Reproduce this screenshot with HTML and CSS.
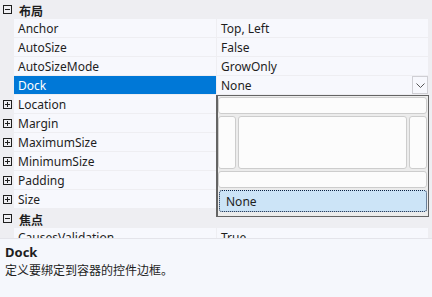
FILE: index.html
```html
<!DOCTYPE html>
<html lang="zh-CN">
<head>
    <meta charset="UTF-8">
    <title>属性</title>
    <link rel="stylesheet" href="styles.css">
</head>
<body>
    <div id="grid">
        <div class="category"><span class="box minus"></span><span class="cat-name">布局</span></div>
        <div class="row"><span class="gut"></span><span class="name">Anchor</span><span class="value">Top, Left</span></div>
        <div class="row"><span class="gut"></span><span class="name">AutoSize</span><span class="value">False</span></div>
        <div class="row"><span class="gut"></span><span class="name">AutoSizeMode</span><span class="value">GrowOnly</span></div>
        <div class="row selected"><span class="gut"></span><span class="name">Dock</span><span class="value">None<span class="drop-btn"><svg width="9" height="5" viewBox="0 0 9 5"><path d="M0.5 0.5 L4.5 4.5 L8.5 0.5" fill="none" stroke="#555" stroke-width="1"/></svg></span></span></div>
        <div class="row"><span class="gut"><span class="box plus"></span></span><span class="name">Location</span><span class="value"></span></div>
        <div class="row"><span class="gut"><span class="box plus"></span></span><span class="name">Margin</span><span class="value"></span></div>
        <div class="row"><span class="gut"><span class="box plus"></span></span><span class="name">MaximumSize</span><span class="value"></span></div>
        <div class="row"><span class="gut"><span class="box plus"></span></span><span class="name">MinimumSize</span><span class="value"></span></div>
        <div class="row"><span class="gut"><span class="box plus"></span></span><span class="name">Padding</span><span class="value"></span></div>
        <div class="row"><span class="gut"><span class="box plus"></span></span><span class="name">Size</span><span class="value"></span></div>
        <div class="category"><span class="box minus"></span><span class="cat-name">焦点</span></div>
        <div class="row"><span class="gut"></span><span class="name">CausesValidation</span><span class="value">True</span></div>

        <div id="dock-popup">
            <div class="dock-top"></div>
            <div class="dock-middle">
                <div class="dock-side"></div>
                <div class="dock-fill"></div>
                <div class="dock-side"></div>
            </div>
            <div class="dock-bottom"></div>
            <div class="dock-none">None</div>
        </div>
    </div>
    <div id="desc">
        <div class="desc-title">Dock</div>
        <div class="desc-text">定义要绑定到容器的控件边框。</div>
    </div>
</body>
</html>
```

FILE: styles.css
```css
body {
    margin: 0;
    width: 432px;
    height: 297px;
    overflow: hidden;
    background-color: #eeeef2;
    font-family: "Noto Sans", "Noto Sans CJK SC", sans-serif;
    font-size: 12px;
    color: #1e1e1e;
}
#grid {
    position: relative;
    height: 238px;
    overflow: hidden;
    border-bottom: 1px solid #e4e4ea;
}
.category {
    display: flex;
    align-items: center;
    height: 19px;
    width: 432px;
    font-weight: bold;
}
.category .box {
    margin-left: 3px;
    margin-right: 7px;
}
.cat-name {
    font-family: "Noto Sans CJK SC", sans-serif;
    font-size: 12px;
    padding-top: 2px;
}
.box {
    box-sizing: border-box;
    width: 9px;
    height: 9px;
    border: 1px solid #1e1e1e;
    position: relative;
    display: inline-block;
}
.box::before {
    content: "";
    position: absolute;
    left: 1px;
    top: 3px;
    width: 5px;
    height: 1px;
    background: #1e1e1e;
}
.box.plus::after {
    content: "";
    position: absolute;
    left: 3px;
    top: 1px;
    width: 1px;
    height: 5px;
    background: #1e1e1e;
}
.row {
    display: flex;
    height: 18px;
    width: 428px;
    border-bottom: 1px solid #eeeef2;
}
.gut {
    width: 14px;
    flex: none;
    display: flex;
    align-items: center;
    background-color: #eeeef2;
}
.gut .box {
    margin-left: 3px;
}
.name, .value {
    box-sizing: border-box;
    height: 18px;
    padding-top: 2px;
    line-height: 16px;
    padding-left: 4px;
    background-color: #f7f8fd;
}
.name {
    width: 203px;
    flex: none;
    border-right: 1px solid #eeeef2;
}
.value {
    flex: 1;
    position: relative;
}
.row.selected .name {
    background-color: #0078d7;
    color: #fff;
}
.drop-btn {
    position: absolute;
    right: 0;
    top: 0;
    box-sizing: border-box;
    width: 16px;
    height: 18px;
    border: 1px solid #cfcfd4;
    background: #f7f8fd;
    display: flex;
    align-items: center;
    justify-content: center;
}
#dock-popup {
    position: absolute;
    left: 216px;
    top: 95px;
    box-sizing: border-box;
    width: 213px;
    height: 122px;
    border: 1px solid #646464;
    border-left-width: 2px;
    background-color: #ececec;
    padding: 1px 1px 1px 0;
    display: flex;
    flex-direction: column;
    gap: 2px;
}
.dock-top, .dock-bottom, .dock-side, .dock-fill {
    box-sizing: border-box;
    background-color: #fcfcfc;
    border: 1px solid #cdcdcd;
    border-radius: 3px;
}
.dock-top, .dock-bottom {
    height: 17px;
}
.dock-middle {
    display: flex;
    gap: 2px;
    height: 53px;
}
.dock-side {
    width: 18px;
}
.dock-fill {
    flex: 1;
}
.dock-none {
    box-sizing: border-box;
    height: 22px;
    margin-left: 1px;
    background-color: #cce4f7;
    border: 1px dotted #0a1f40;
    border-radius: 3px;
    padding-left: 6px;
    line-height: 21px;
    color: #1e1e1e;
}
#desc {
    height: 58px;
    background-color: #f5f7fc;
    padding: 5px 5px;
    box-sizing: border-box;
}
.desc-title {
    font-weight: bold;
    line-height: 17px;
    font-size: 13px;
}
.desc-text {
    font-family: "Noto Sans CJK SC", sans-serif;
    line-height: 18px;
}
```
